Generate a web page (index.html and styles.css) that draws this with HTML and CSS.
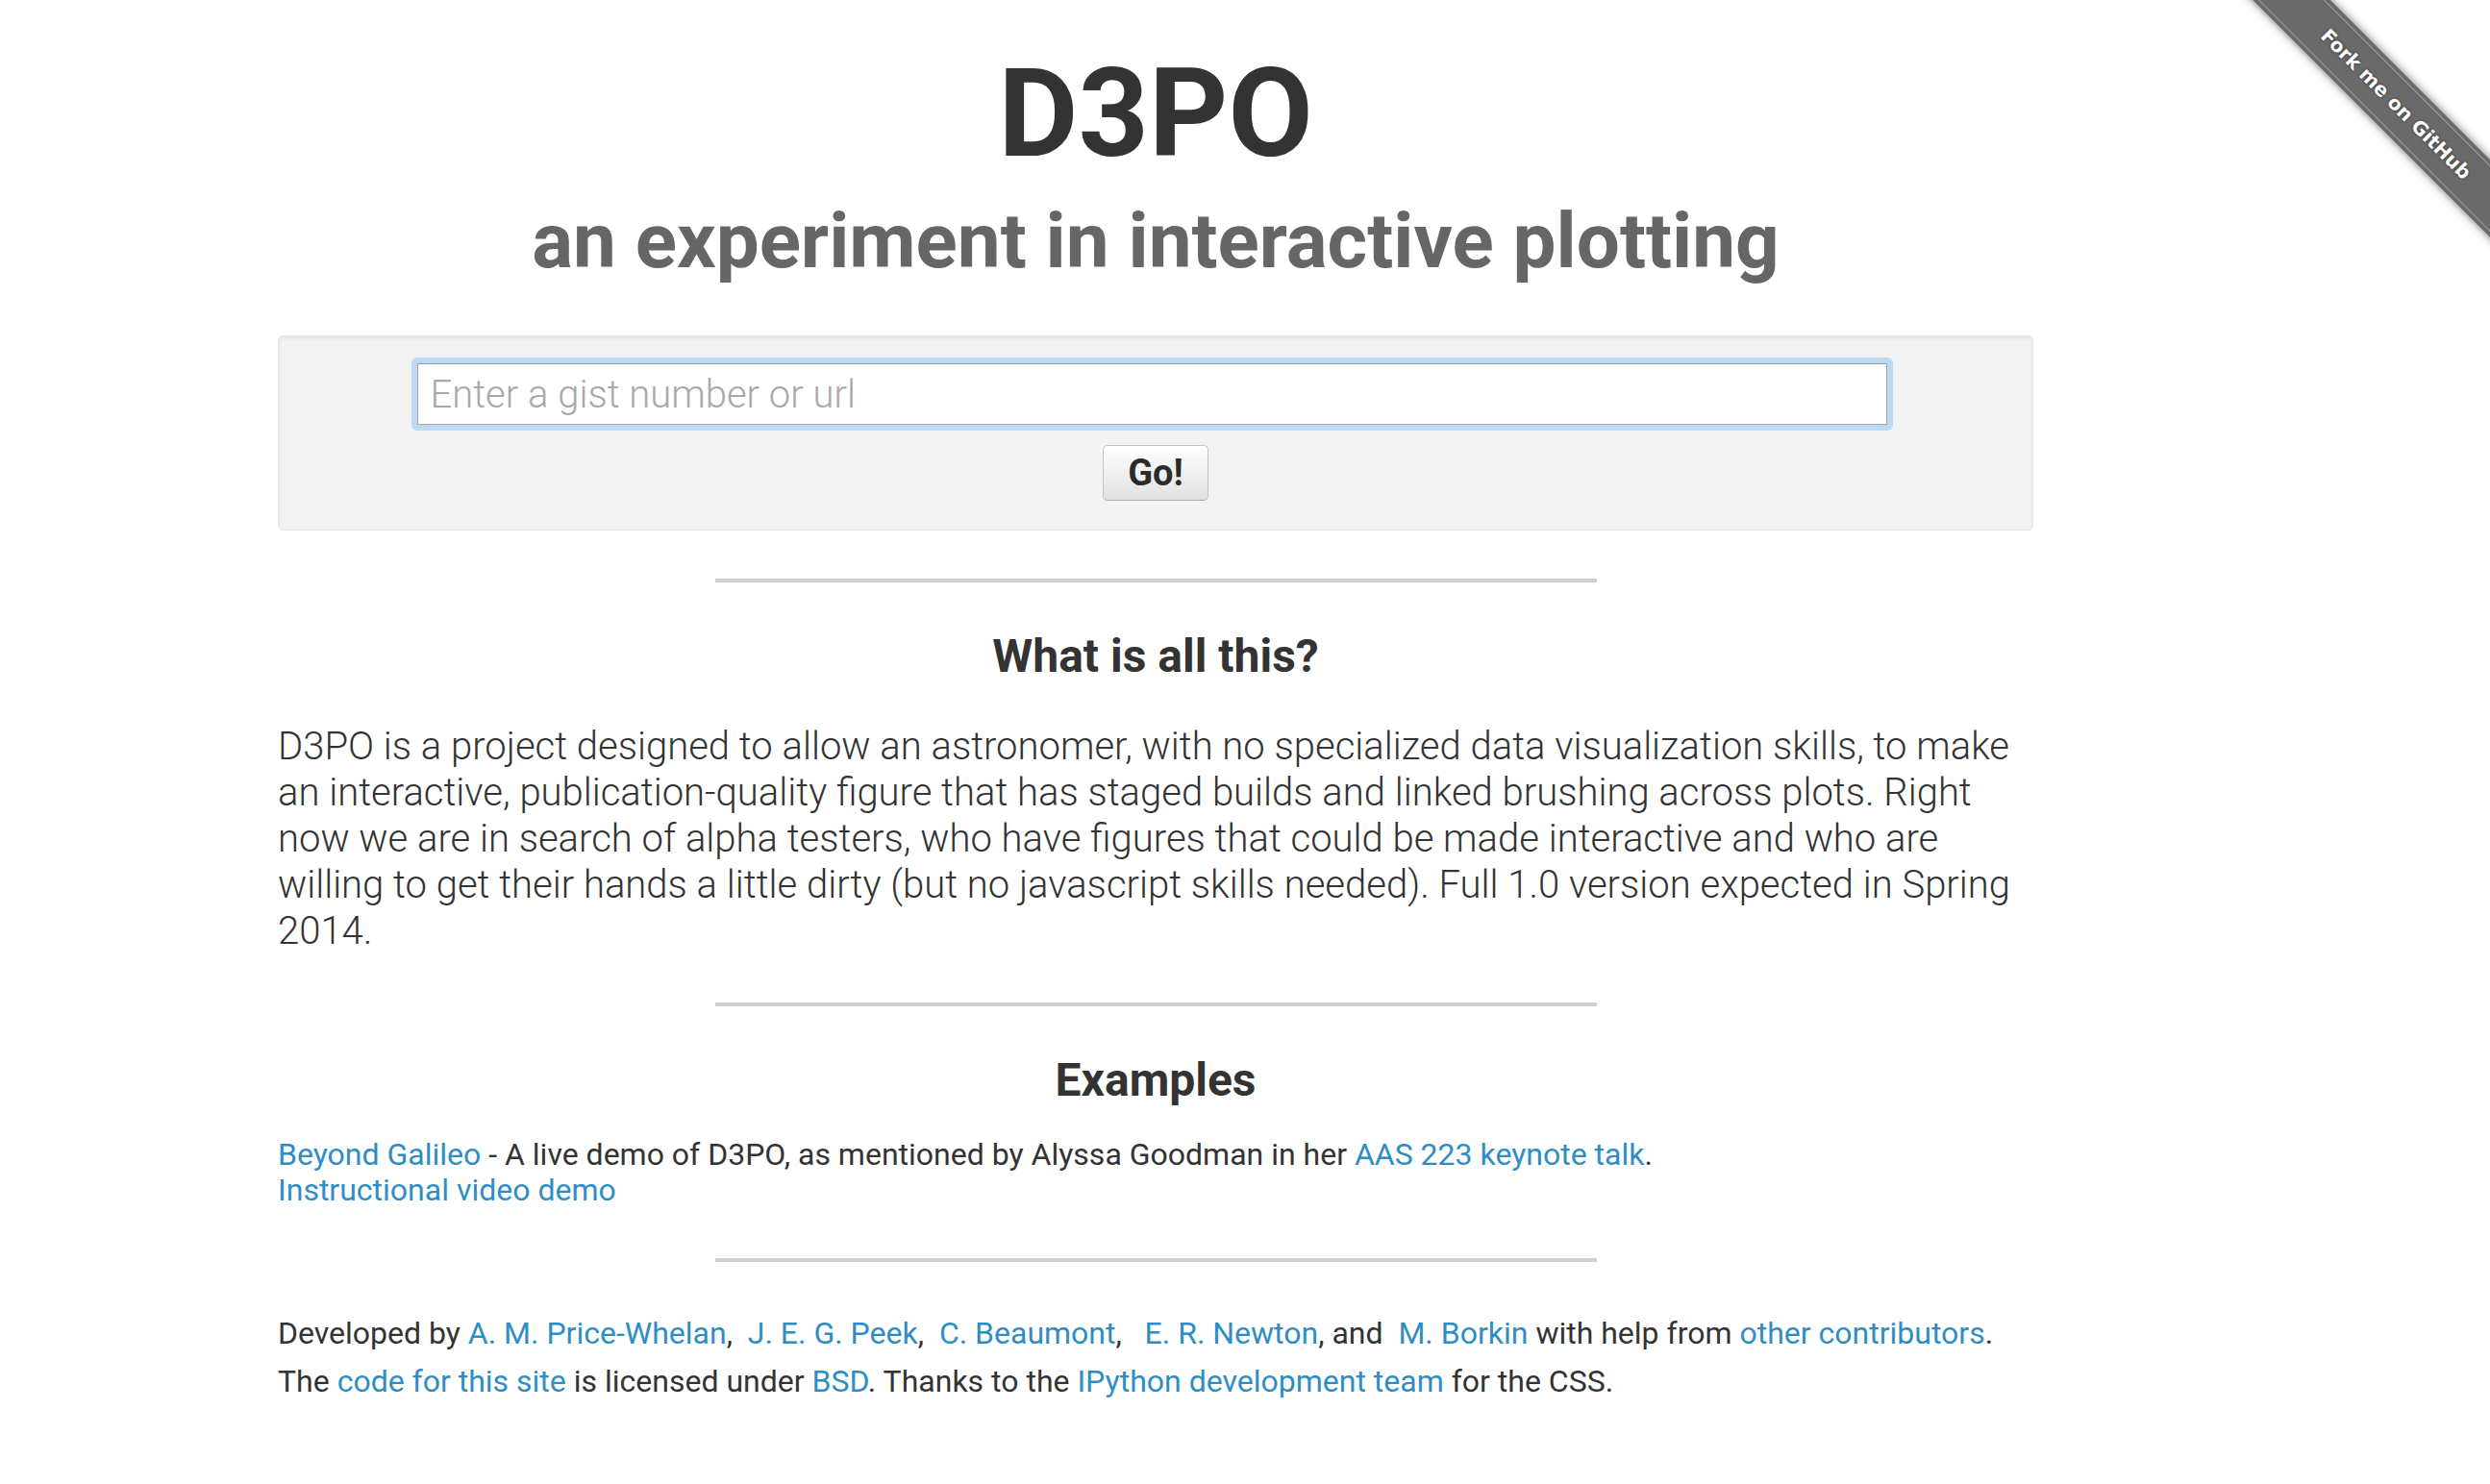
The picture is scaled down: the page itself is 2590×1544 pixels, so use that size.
FILE: index.html
```html
<!DOCTYPE html>
<html lang="en">
<head>
<meta charset="utf-8">
<title>D3PO</title>
<link rel="stylesheet" href="styles.css">
</head>
<body>
<div class="fork-wrap"><a class="ribbon" href="#"><span class="ribbon-text">Fork me on GitHub</span></a></div>
<div class="container">
  <header class="masthead">
    <h1 class="title">D3PO</h1>
    <h2 class="subtitle">an experiment in interactive plotting</h2>
  </header>
  <form class="well">
    <div class="focus-ring"><input class="gist-input" type="text" placeholder="Enter a gist number or url"></div>
    <button class="go" type="button">Go!</button>
  </form>
  <hr class="rule rule-first">
  <h3 class="section-title">What is all this?</h3>
  <p class="lead">D3PO is a project designed to allow an astronomer, with no specialized data visualization skills, to make an interactive, publication-quality figure that has staged builds and linked brushing across plots. Right now we are in search of alpha testers, who have figures that could be made interactive and who are willing to get their hands a little dirty (but no javascript skills needed). Full 1.0 version expected in Spring 2014.</p>
  <hr class="rule rule-second">
  <h3 class="section-title">Examples</h3>
  <p class="examples"><a href="#">Beyond Galileo</a> - A live demo of D3PO, as mentioned by Alyssa Goodman in her <a href="#">AAS 223 keynote talk</a>.<br><a href="#">Instructional video demo</a></p>
  <hr class="rule rule-third">
  <p class="credits">Developed by <a href="#">A. M. Price-Whelan</a>,&nbsp; <a href="#">J. E. G. Peek</a>,&nbsp; <a href="#">C. Beaumont</a>,&nbsp;&nbsp; <a href="#">E. R. Newton</a>, and&nbsp; <a href="#">M. Borkin</a> with help from <a href="#">other contributors</a>.<br>The <a href="#">code for this site</a> is licensed under <a href="#">BSD</a>. Thanks to the <a href="#">IPython development team</a> for the CSS.</p>
</div>
</body>
</html>
```
FILE: styles.css
```css
html, body {
  margin: 0;
  padding: 0;
  background: #fff;
}
body {
  font-family: Roboto, "Liberation Sans", sans-serif;
  color: #333;
  position: relative;
  min-height: 1544px;
  overflow: hidden;
}
a {
  color: #2f8dc6;
  text-decoration: none;
}
.container {
  width: 1826px;
  margin-left: 289px;
}
.masthead {
  text-align: center;
}
.title {
  margin: 0;
  padding-top: 54px;
  font-size: 128px;
  line-height: 128px;
  font-weight: 700;
  color: #333;
}
.subtitle {
  margin: 29px 0 0;
  font-size: 80px;
  line-height: 80px;
  font-weight: 700;
  color: #666;
}
.well {
  margin: 58px 0 0;
  height: 203px;
  box-sizing: border-box;
  padding: 22px 0 30px;
  border: 1px solid #e6e6e6;
  border-radius: 5px;
  background: #f3f3f3;
  box-shadow: inset 0 2px 4px rgba(0, 0, 0, 0.07);
  display: flex;
  flex-direction: column;
  align-items: center;
  gap: 15px;
}
.focus-ring {
  width: 1541px;
  margin-right: 8px;
  box-sizing: border-box;
  padding: 6px;
  background: #bcd9f6;
  border-radius: 6px;
}
.gist-input {
  display: block;
  width: 100%;
  height: 64px;
  box-sizing: border-box;
  margin: 0;
  padding: 0 13px;
  border: 1px solid #a6a6a6;
  border-top-color: #999;
  background: #fff;
  font-family: Roboto, "Liberation Sans", sans-serif;
  font-weight: 300;
  font-size: 40px;
  color: #333;
  outline: none;
}
.gist-input::placeholder {
  color: #a8a8a8;
  opacity: 1;
}
.go {
  width: 110px;
  height: 58px;
  margin: 0;
  padding: 0;
  border: 1px solid #c6c6c6;
  border-bottom-color: #adadad;
  border-radius: 5px;
  background: linear-gradient(#ffffff, #e1e1e1);
  font-family: Roboto, "Liberation Sans", sans-serif;
  font-weight: 700;
  font-size: 38px;
  line-height: 56px;
  color: #2b2b2b;
}
.rule {
  width: 917px;
  height: 4px;
  margin: 50px auto 0;
  border: 0;
  background: #cfcfcf;
}
.section-title {
  margin: 53px 0 0;
  text-align: center;
  font-size: 48px;
  line-height: 48px;
  font-weight: 700;
  color: #333;
}
.lead {
  margin: 46px 0 0;
  font-size: 40px;
  line-height: 48px;
  font-weight: 300;
  color: #333;
}
.examples {
  margin: 35px 0 0;
  font-size: 32px;
  line-height: 37px;
  font-weight: 400;
}
.rule-third {
  margin-top: 52px;
}
.credits {
  margin: 49px 0 0;
  font-size: 32px;
  line-height: 50px;
  font-weight: 400;
}
.fork-wrap {
  position: absolute;
  top: 0;
  right: 0;
  width: 320px;
  height: 320px;
  overflow: hidden;
  pointer-events: none;
}
.ribbon {
  position: absolute;
  left: 12px;
  top: 80px;
  width: 420px;
  height: 57px;
  box-sizing: border-box;
  padding: 4px 0;
  background: #6a6a6a;
  box-shadow: 0 0 10px rgba(0, 0, 0, 0.55);
  transform: rotate(45deg);
  color: #fff;
  pointer-events: auto;
}
.ribbon-text {
  display: block;
  height: 49px;
  box-sizing: border-box;
  border-top: 1px solid rgba(255, 255, 255, 0.35);
  border-bottom: 1px solid rgba(255, 255, 255, 0.35);
  text-align: center;
  font-family: "DejaVu Sans", sans-serif;
  font-weight: 700;
  font-size: 20px;
  line-height: 47px;
  text-shadow: 0 0 3px rgba(0, 0, 0, 0.6);
}
```
